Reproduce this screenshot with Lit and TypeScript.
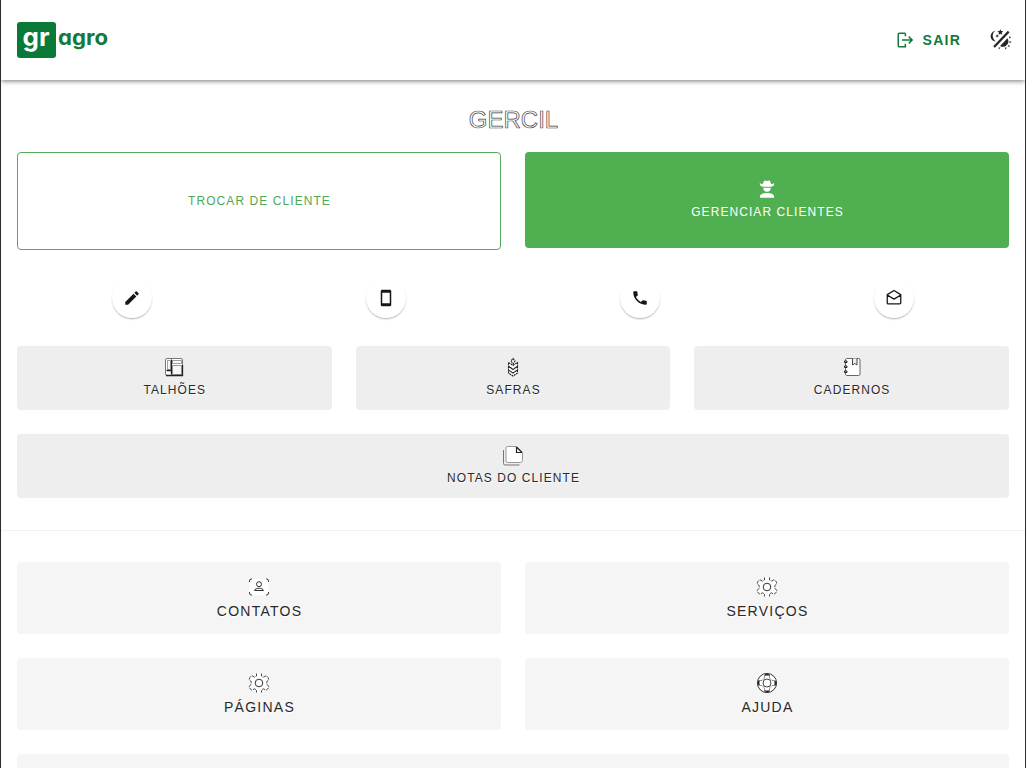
import { LitElement, html, svg, css } from "lit";
import { customElement, property } from "lit/decorators.js";

// Outline glyphs are drawn with a fine dark line around a light body.
const glyphs: Record<string, unknown> = {
  logout: svg`<g fill="none" stroke="currentColor" stroke-width="2"><path d="M12.5 3H4.5A1.5 1.5 0 0 0 3 4.500V19.500A1.500 1.500 0 0 0 4.500 21H12.500V17M12.500 7V3M8 12H21.500M17 7.500L21.500 12L17 16.500"/></g>`,
  theme: svg`<g fill="currentColor"><path d="M6 1.500C2.300 2.600 .2 5.600 .8 9C1.300 11.800 3.300 13.400 6.200 13.500C4 11.700 2.900 9.300 3 6.900C3.200 4.600 4.200 2.700 6 1.500Z"/><path d="M11.300 .3L12.200 2.300L14.500 2.500L12.800 4L13.300 6.300L11.300 5.100L9.300 6.300L9.800 4L8.100 2.500L10.400 2.300Z"/><path d="M7.800 5.600L8.500 7L10 7.600L8.500 8.200L7.800 9.600L7.100 8.200L5.600 7.600L7.100 7Z"/><path d="M19.500 2L21.200 3.700L5.300 20.500L3.500 18.800Z"/><path d="M19 10A6 6 0 0 1 11 18.500Z"/><path d="M20.800 8L23 9L21.200 10.500ZM21.300 13L23.600 14.200L21.300 15.500ZM20.500 17.200L21.900 19.500L19.300 18.700ZM16 20.500L18 20L17.500 22.500ZM9.500 20L11.500 20.500L9.500 22.300Z"/></g>`,
  farmer: svg`<g fill="currentColor"><path d="M2.500 4C3.500 5 4.800 5.400 6.500 5.400C7 3 8 .8 9.500 .8C10.500 .8 11 1.300 12 1.300C13 1.300 13.500 .8 14.500 .8C16 .8 17 3 17.500 5.400C19.200 5.400 20.500 5 21.500 4C22.200 7 19.500 9 17 9H7C4.500 9 1.800 7 2.500 4Z"/><path d="M7 10.200H17A5 5.500 0 0 1 7 10.200ZM2.500 22.500C2.500 18.500 7 17.200 12 17.200S21.500 18.500 21.500 22.500V23.500H2.500Z"/></g>`,
  pencil: svg`<path fill="currentColor" d="M20.710 7.040C21.100 6.650 21.100 6 20.710 5.630L18.370 3.290C18 2.900 17.350 2.900 16.960 3.290L15.120 5.120L18.870 8.870M3 17.250V21H6.750L17.810 9.930L14.060 6.180L3 17.250Z"/>`,
  cellphone: svg`<path fill="currentColor" d="M17 19H7V5H17M17 1H7C5.890 1 5 1.890 5 3V21A2 2 0 0 0 7 23H17A2 2 0 0 0 19 21V3C19 1.890 18.100 1 17 1Z"/>`,
  phone: svg`<path fill="currentColor" d="M6.620 10.790C8.060 13.620 10.380 15.940 13.210 17.380L15.410 15.180C15.690 14.900 16.080 14.820 16.430 14.930C17.550 15.300 18.750 15.500 20 15.500A1 1 0 0 1 21 16.500V20A1 1 0 0 1 20 21A17 17 0 0 1 3 4A1 1 0 0 1 4 3H7.500A1 1 0 0 1 8.500 4C8.500 5.250 8.700 6.450 9.070 7.570C9.180 7.920 9.100 8.310 8.820 8.590L6.620 10.790Z"/>`,
  mail: svg`<path fill="none" stroke="currentColor" stroke-width="1.700" stroke-linejoin="round" d="M3 7.500L12 2L21 7.500V18.500A1.200 1.200 0 0 1 19.800 19.700H4.200A1.200 1.200 0 0 1 3 18.500ZM3 8L12 13.500L21 8"/>`,
  field: svg`<rect x="3.500" y="3.500" width="17" height="17" rx="1.500" fill="#fff" stroke="#777"/><path d="M5.500 5.500H8.500V14.500H5.500ZM10.500 5.500H19.500V8.500H10.500ZM10.500 10.500H19.500V19.500H10.500Z" fill="#f6f6f6" stroke="#777" stroke-width=".7"/><path d="M20.500 10V20.500H4M9.500 4.500V19.500M4.500 15.500H9" fill="none" stroke="#222" stroke-width="1.300"/>`,
  wheat: svg`<g fill="#fff" stroke="#222" stroke-width="1.100" stroke-dasharray="2 .7"><path d="M7.500 7.500L12 10.500L16.500 7.500V11L12 14.500L7.500 11ZM7.500 11.500L12 14.500L16.500 11.500V15L12 18L7.500 15ZM7.500 15L12 18L16.500 15V18L12 21L7.500 18Z"/><path d="M12 3.500L14 6L12 9L10 6Z"/></g>`,
  notebook: svg`<path d="M6.500 3.500H18.500A1.500 1.500 0 0 1 20 5V19A1.500 1.500 0 0 1 18.500 20.500H6.500A1.500 1.500 0 0 1 5.500 19V5A1.500 1.500 0 0 1 6.500 3.500Z" fill="#fff" stroke="#666"/><path d="M12.500 3.500V10L14.700 8.500L17 10V3.500" fill="#eee" stroke="#333" stroke-width=".9"/><path d="M4.500 6H7V7.500H4.500ZM4.500 11H7V12.500H4.500ZM4.500 16H7V17.500H4.500Z" fill="#fff" stroke="#222"/>`,
  notes: svg`<path d="M2.500 7V20.500A1.500 1.500 0 0 0 4 22H18.500" fill="none" stroke="#777"/><path d="M6.500 3.500H15.500L21.500 9.500V17.500A2 2 0 0 1 19.500 19.500H6.500A1.500 1.500 0 0 1 5 18V5A1.500 1.500 0 0 1 6.500 3.500Z" fill="#fff" stroke="#999"/><path d="M15.500 4V9.500H21M15.500 4L21 9.500" fill="none" stroke="#222" stroke-width="1.200"/>`,
  contact: svg`<rect x="2.500" y="4" width="19" height="16" rx="2" fill="#fff"/><path d="M2.500 7V6A2 2 0 0 1 4.500 4H5M19 4H19.500A2 2 0 0 1 21.500 6V7M21.500 17V18A2 2 0 0 1 19.500 20H19M5 20H4.500A2 2 0 0 1 2.500 18V17" fill="none" stroke="#333"/><circle cx="12" cy="9.200" r="2.500" fill="#fff" stroke="#333"/><path d="M7.500 15.500C8 12.500 16 12.500 16.500 15.500Z" fill="#fff" stroke="#333"/>`,
  gear: svg`<path d="M9.500 2.500H14.500V5L16.500 6.200L19 4.800Q21.700 6 21.700 9L19.800 10.500V13.500L21.700 15Q21.700 18 19 19.200L16.500 17.800L14.500 19V21.500H9.500V19L7.500 17.800L5 19.200Q2.300 18 2.300 15L4.200 13.500V10.500L2.300 9Q2.300 6 5 4.800L7.500 6.200L9.500 5Z" fill="#fff"/><path d="M9.500 2.500V5L7.500 6.200L5 4.800Q2.300 6 2.300 9L4.200 10.500V13.500L2.300 15Q2.300 18 5 19.200L7.500 17.800L9.500 19V21.500M14.500 2.500V5L16.500 6.200L19 4.800Q21.700 6 21.700 9L19.800 10.500V13.500L21.700 15Q21.700 18 19 19.200L16.500 17.800L14.500 19V21.500" fill="none" stroke="#333" stroke-width=".9" stroke-dasharray="3.500 1"/><circle cx="12" cy="12" r="3.800" fill="#fff" stroke="#333"/>`,
  buoy: svg`<circle cx="12" cy="12" r="9.600" fill="#fff" stroke="#333" stroke-width="1"/><circle cx="12" cy="12" r="8.300" fill="none" stroke="#222" stroke-width="1.500" stroke-dasharray="5 8.038" stroke-dashoffset="2.500"/><circle cx="12" cy="12" r="4" fill="#fff" stroke="#444"/><path d="M9.500 4V7L7 9.500H4M14.500 4V7L17 9.500H20M4 14.500H7L9.500 17V20M20 14.500H17L14.500 17V20" fill="none" stroke="#666" stroke-width=".7"/>`,
};

@customElement("ui-icon")
class UiIcon extends LitElement {
  @property() name = "";
  @property({ type: Number }) size = 24;
  static styles = css`
    :host { display: block; flex: none; }
    .glyph { display: block; }
  `;
  render() {
    return html`<svg class="glyph" viewBox="0 0 24 24" width=${this.size} height=${this.size} aria-hidden="true">${glyphs[this.name]}</svg>`;
  }
}

@customElement("action-tile")
class ActionTile extends LitElement {
  @property() icon = "";
  @property() label = "";
  @property({ reflect: true }) kind = "field";
  static styles = css`
    :host { display: block; }
    .tile {
      box-sizing: border-box; width: 100%; height: 64px; padding: 9px 0 0; border: 0; border-radius: 4px;
      display: flex; flex-direction: column; align-items: center;
      background: #eee; color: #292929; font: 12px/22px "Liberation Sans", Arial, sans-serif;
      letter-spacing: 0.0892857em; text-transform: uppercase;
    }
    .label { padding-left: 1px; text-shadow: 0.5px 0.5px 0 #fff; }
    :host([kind="menu"]) .tile { height: 72px; padding-top: 13px; background: #f5f5f5; font-size: 14px; line-height: 24px; }
    :host([kind="primary"]) .tile { height: 96px; padding-top: 28px; background: #50af50; color: #fff; line-height: 28px; }
    :host([kind="outlined"]) .tile { height: 98px; padding: 0; justify-content: center; background: #fff; color: #50a855; border: 1px solid #55aa5a; }
    :host([kind="primary"]) .label, :host([kind="outlined"]) .label { text-shadow: none; }
  `;
  render() {
    return html`<button class="tile">
      ${this.icon ? html`<ui-icon name=${this.icon} size=${this.kind === "primary" ? 18 : 24}></ui-icon>` : ""}
      <span class="label">${this.label}</span>
    </button>`;
  }
}

@customElement("app-root")
class AppRoot extends LitElement {
  static styles = css`
    :host { display: block; font-family: "Liberation Sans", Arial, sans-serif; }
    .page { box-sizing: border-box; height: 768px; overflow: hidden; background: #fff; border: solid #2c2c30; border-width: 0 1px; }
    .bar {
      box-sizing: border-box; height: 80px; padding: 0 13px 0 16px; display: flex; align-items: center; justify-content: space-between;
      background: #fff; box-shadow: 0 2px 4px -1px #0005, 0 2px 5px #0003;
    }
    .logo { display: block; overflow: visible; }
    .mark { font: 700 25px Inter, Roboto, sans-serif; fill: #fff; }
    .word { font: 700 21px Inter, Roboto, sans-serif; font-feature-settings: "cv11" 1; fill: #13793c; }
    .actions { display: flex; align-items: center; gap: 29px; color: #262626; }
    .exit { display: flex; align-items: center; gap: 9px; color: #13793c; font-size: 14px; font-weight: 700; letter-spacing: 0.0892857em; }
    .title { margin: 0; padding: 24px 0 0 1px; height: 48px; text-align: center; font-size: 24px; font-weight: 400; line-height: 32px; color: transparent; -webkit-text-stroke: 0.7px #444; }
    .content { padding: 0 16px; }
    .two, .three { display: grid; column-gap: 24px; align-items: start; }
    .two { grid-template-columns: 1fr 1fr; }
    .three { grid-template-columns: repeat(3, 1fr); }
    .contacts { margin: 28px -12px; display: grid; grid-template-columns: repeat(4, 1fr); justify-items: center; }
    .round { width: 40px; height: 40px; padding: 0; border: 0; border-radius: 50%; display: grid; place-items: center; background: #fff; color: #171717; box-shadow: 0 1.5px 2px -0.5px #0005; }
    .notes { margin-top: 24px; }
    .rule { height: 1px; margin: 32px 0 31px; background: #f2f2f2; }
    .menu { row-gap: 24px; }
    .wide { grid-column: 1 / -1; }
  `;
  render() {
    return html`<div class="page">
      <header class="bar">
        <svg class="logo" width="92" height="36" viewBox="0 0 92 36">
          <rect width="39" height="36" rx="3" fill="#087936" />
          <text class="mark" x="5.500" y="24" textLength="27" lengthAdjust="spacingAndGlyphs">gr</text>
          <text class="word" x="41" y="23" textLength="50" lengthAdjust="spacingAndGlyphs">agro</text>
        </svg>
        <div class="actions">
          <span class="exit"><ui-icon name="logout" size="18"></ui-icon>SAIR</span>
          <ui-icon name="theme" size="22"></ui-icon>
        </div>
      </header>
      <h1 class="title">GERCIL</h1>
      <main class="content">
        <div class="two">
          <action-tile kind="outlined" label="Trocar de cliente"></action-tile>
          <action-tile kind="primary" icon="farmer" label="Gerenciar clientes"></action-tile>
        </div>
        <div class="contacts">
          ${["pencil", "cellphone", "phone", "mail"].map((n) => html`<button class="round"><ui-icon name=${n} size="18"></ui-icon></button>`)}
        </div>
        <div class="three">
          <action-tile icon="field" label="Talhões"></action-tile>
          <action-tile icon="wheat" label="Safras"></action-tile>
          <action-tile icon="notebook" label="Cadernos"></action-tile>
        </div>
        <action-tile class="notes" icon="notes" label="Notas do cliente"></action-tile>
      </main>
      <div class="rule"></div>
      <nav class="content two menu">
        <action-tile kind="menu" icon="contact" label="Contatos"></action-tile>
        <action-tile kind="menu" icon="gear" label="Serviços"></action-tile>
        <action-tile kind="menu" icon="gear" label="Páginas"></action-tile>
        <action-tile kind="menu" icon="buoy" label="Ajuda"></action-tile>
        <action-tile class="wide" kind="menu"></action-tile>
      </nav>
    </div>`;
  }
}
